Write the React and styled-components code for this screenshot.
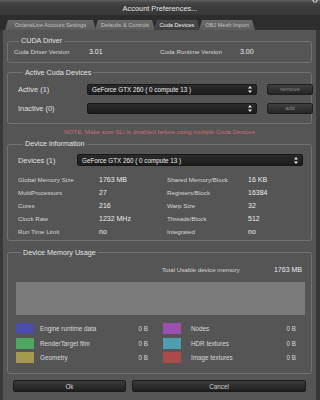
import React from 'react'
import styled, { createGlobalStyle } from 'styled-components'

const GlobalStyle = createGlobalStyle`
  html, body {
    margin: 0;
    padding: 0;
    background: #555;
  }
  body {
    font-family: 'Liberation Sans', Arial, sans-serif;
  }
`

const tabs = [
  { label: 'OctaneLive Account Settings', w: 91 },
  { label: 'Defaults & Controls', w: 60 },
  { label: 'Cuda Devices', w: 46, active: true },
  { label: 'OBJ Mesh Import', w: 56 },
]

const info = [
  ['Global Memory Size', '1763 MB', 'Shared Memory/Block', '16 KB'],
  ['MultiProcessors', '27', 'Registers/Block', '16384'],
  ['Cores', '216', 'Warp Size', '32'],
  ['Clock Rate', '1232 MHz', 'Threads/Block', '512'],
  ['Run Time Limit', 'no', 'Integrated', 'no'],
]

const memory = [
  ['#4d4ca6', 'Engine runtime data', '#9b50b0', 'Nodes'],
  ['#4fa862', 'RenderTarget film', '#4f9db1', 'HDR textures'],
  ['#a6994d', 'Geometry', '#a94b4b', 'Image textures'],
]

function Arrows() {
  return (
    <ArrowIcon viewBox="0 0 4 7">
      <path d="M2 0 L4 2.6 L0 2.6 Z M2 7 L4 4.4 L0 4.4 Z" fill="#e8e8e8" />
    </ArrowIcon>
  )
}

function App() {
  return (
    <Window>
      <GlobalStyle />
      <TitleBar>
        Account Preferences...
        <CornerIcon viewBox="0 0 6 5">
          <path d="M0.5 0 L2.5 2.5 M5.5 0 L3.5 2.5" stroke="#d8d8d8" strokeWidth="1.2" />
        </CornerIcon>
      </TitleBar>
      <TabStrip>
        {tabs.map((t) => (
          <Tab key={t.label} $w={t.w} $active={t.active}>{t.label}</Tab>
        ))}
      </TabStrip>
      <Body>
        <Group $mt={7} $pad="1px 6px 5.5px 6px">
          <Legend>CUDA Driver</Legend>
          <DriverRow>
            <Label>Cuda Driver Version</Label>
            <Value>3.01</Value>
            <Label>Cuda Runtime Version</Label>
            <Value>3.00</Value>
          </DriverRow>
        </Group>

        <Group $mt={6} $pad="7px 8px 9px 10px">
          <Legend>Active Cuda Devices</Legend>
          <DeviceGrid>
            <RowLabel>Active (1)</RowLabel>
            <Select>
              <span>GeForce GTX 260 ( 0 compute 13 )</span>
              <Arrows />
            </Select>
            <SmallButton>remove</SmallButton>
            <RowLabel>Inactive (0)</RowLabel>
            <Select>
              <span />
              <Arrows />
            </Select>
            <SmallButton>add</SmallButton>
          </DeviceGrid>
        </Group>

        <Note>NOTE: Make sure SLI is disabled before using multiple Cuda Devices</Note>

        <Group $mt={4} $pad="6px 8px 1.5px 10px">
          <Legend>Device information</Legend>
          <DevicesRow>
            <RowLabel>Devices (1)</RowLabel>
            <Select>
              <span>GeForce GTX 260 ( 0 compute 13 )</span>
              <Arrows />
            </Select>
          </DevicesRow>
          <InfoGrid>
            {info.map((r) => (
              <React.Fragment key={r[0]}>
                <Label>{r[0]}</Label>
                <Value>{r[1]}</Value>
                <Label>{r[2]}</Label>
                <Value>{r[3]}</Value>
              </React.Fragment>
            ))}
          </InfoGrid>
        </Group>

        <Group $mt={8} $pad="8px 6px 9.5px 8px">
          <Legend>Device Memory Usage</Legend>
          <TotalRow>
            <Label>Total Usable device memory</Label>
            <Value>1763 MB</Value>
          </TotalRow>
          <UsageBar />
          <MemoryGrid>
            {memory.map((m) => (
              <React.Fragment key={m[1]}>
                <MemItem $gap={6}>
                  <Swatch $color={m[0]} />
                  <MemLabel>{m[1]}</MemLabel>
                  <MemValue>0 B</MemValue>
                </MemItem>
                <MemItem $gap={10}>
                  <Swatch $color={m[2]} />
                  <MemLabel>{m[3]}</MemLabel>
                  <MemValue>0 B</MemValue>
                </MemItem>
              </React.Fragment>
            ))}
          </MemoryGrid>
        </Group>

        <ButtonRow>
          <DialogButton>Ok</DialogButton>
          <DialogButton>Cancel</DialogButton>
        </ButtonRow>
      </Body>
    </Window>
  )
}

export default App

const Window = styled.div`
  width: 320px;
  height: 400px;
  overflow: hidden;
  display: flex;
  flex-direction: column;
  background: #555;
`
const TitleBar = styled.div`
  position: relative;
  height: 15px;
  flex: none;
  display: flex;
  align-items: center;
  justify-content: center;
  padding-top: 1px;
  box-sizing: border-box;
  background: linear-gradient(#616161 0, #4a4a4a 2px, #3d3d3d 6px, #383838 100%);
  color: #e6e6e6;
  font-size: 7.4px;
`
const CornerIcon = styled.svg`
  position: absolute;
  top: 0;
  right: 2px;
  width: 6px;
  height: 5px;
`
const TabStrip = styled.div`
  height: 15px;
  flex: none;
  display: flex;
  align-items: flex-end;
  padding-left: 5px;
  background: #2d2d2d;
`
const Tab = styled.div`
  width: ${(p) => p.$w}px;
  height: 10px;
  margin-right: -1px;
  display: flex;
  align-items: center;
  justify-content: center;
  font-size: 5.6px;
  white-space: nowrap;
  color: ${(p) => (p.$active ? '#f0f0f0' : '#c2c2c2')};
  background: ${(p) =>
    p.$active
      ? 'linear-gradient(#4a4a4a, #404040)'
      : 'linear-gradient(#6b6b6b, #5c5c5c)'};
  clip-path: polygon(3px 0, calc(100% - 3px) 0, 100% 100%, 0 100%);
`
const Body = styled.div`
  flex: 1;
  display: flex;
  flex-direction: column;
  padding: 0 4px;
  background: #555;
  border-left: 3px solid #393939;
  border-right: 4px solid #393939;
`
const Group = styled.fieldset`
  margin: ${(p) => p.$mt}px 0 0;
  padding: ${(p) => p.$pad};
  border: 1px solid #727272;
  border-radius: 3px;
  min-width: 0;
`
const Legend = styled.legend`
  margin-left: 5px;
  padding: 0 2px;
  font-size: 7.2px;
  line-height: 8px;
  color: #e4e4e4;
`
const Label = styled.div`
  font-size: 6.2px;
  color: #d6d6d6;
  white-space: nowrap;
`
const Value = styled.div`
  font-size: 7px;
  color: #ececec;
  white-space: nowrap;
`
const RowLabel = styled.div`
  font-size: 7.4px;
  color: #e0e0e0;
  white-space: nowrap;
`
const DriverRow = styled.div`
  height: 10px;
  display: grid;
  grid-template-columns: 75px 71px 80px 1fr;
  align-items: center;
`
const DeviceGrid = styled.div`
  display: grid;
  grid-template-columns: 59px 170px 46px;
  grid-auto-rows: 11px;
  column-gap: 10px;
  row-gap: 8px;
  align-items: center;
`
const Select = styled.div`
  height: 100%;
  box-sizing: border-box;
  display: flex;
  align-items: center;
  justify-content: space-between;
  padding: 0 4px 0 4px;
  background: linear-gradient(#2b2b2b, #1c1c1c);
  border: 1px solid #171717;
  border-radius: 2px;
  font-size: 6.3px;
  color: #ececec;
  white-space: nowrap;
`
const ArrowIcon = styled.svg`
  width: 4px;
  height: 7px;
  flex: none;
`
const SmallButton = styled.div`
  height: 100%;
  box-sizing: border-box;
  display: flex;
  align-items: center;
  justify-content: center;
  background: linear-gradient(#3f3f3f, #262626);
  border: 1px solid #1e1e1e;
  border-radius: 2px;
  font-size: 5.8px;
  color: #8c8c8c;
`
const Note = styled.div`
  margin-top: 4.5px;
  height: 8px;
  line-height: 8px;
  text-align: center;
  font-size: 6.2px;
  color: #cf6d6d;
  white-space: nowrap;
`
const DevicesRow = styled.div`
  display: grid;
  grid-template-columns: 59px 1fr;
  height: 12px;
  align-items: center;
`
const InfoGrid = styled.div`
  margin-top: 7px;
  display: grid;
  grid-template-columns: 81px 68px 81px 1fr;
  grid-auto-rows: 13px;
  align-items: center;
`
const TotalRow = styled.div`
  height: 10px;
  display: grid;
  grid-template-columns: 112px auto;
  justify-content: end;
  align-items: center;
  padding-right: 3px;
`
const UsageBar = styled.div`
  margin-top: 7px;
  height: 33.5px;
  background: #7b7b7b;
`
const MemoryGrid = styled.div`
  margin-top: 8px;
  display: grid;
  grid-template-columns: 132px 133px;
  grid-auto-rows: 11px;
  column-gap: 15px;
  row-gap: 3.5px;
`
const MemItem = styled.div`
  display: flex;
  align-items: center;
  gap: ${(p) => p.$gap}px;
`
const Swatch = styled.div`
  width: 18px;
  height: 11px;
  flex: none;
  background: ${(p) => p.$color};
`
const MemLabel = styled.div`
  flex: 1;
  font-size: 6.3px;
  color: #dadada;
  white-space: nowrap;
`
const MemValue = styled.div`
  font-size: 6.3px;
  color: #dadada;
`
const ButtonRow = styled.div`
  margin-top: 6.5px;
  padding-left: 6px;
  display: grid;
  grid-template-columns: 113px 174px;
  column-gap: 6px;
  height: 12px;
`
const DialogButton = styled.div`
  box-sizing: border-box;
  display: flex;
  align-items: center;
  justify-content: center;
  background: linear-gradient(#3c3c3c, #1f1f1f);
  border: 1px solid #1a1a1a;
  border-radius: 2px;
  font-size: 6.3px;
  color: #d4d4d4;
`
